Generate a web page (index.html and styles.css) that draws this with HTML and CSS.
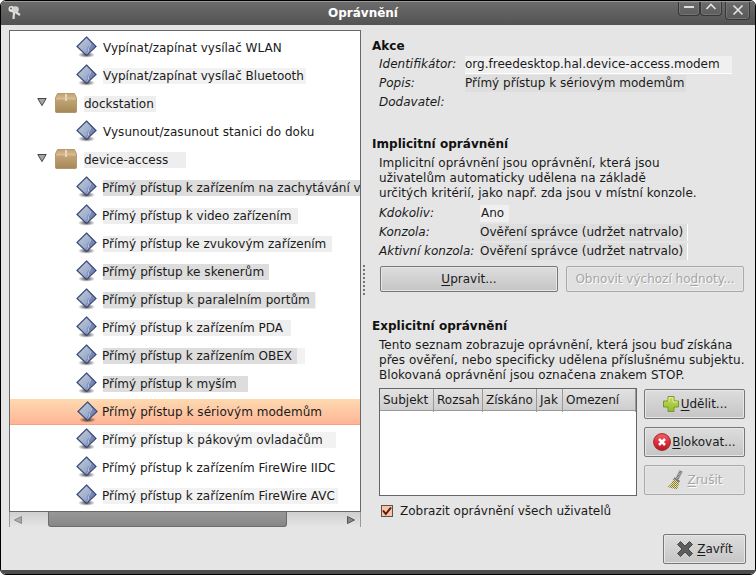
FILE: index.html
```
<!DOCTYPE html>
<html lang="cs">
<head>
<meta charset="utf-8">
<title>Oprávnění</title>
<link rel="stylesheet" href="styles.css">
</head>
<body>
<svg class="defs" width="0" height="0" aria-hidden="true">
  <defs>
    <linearGradient id="blue" x1="0" y1="0" x2="1" y2="1"><stop offset="0" stop-color="#c3cddd"/><stop offset=".5" stop-color="#a3b1cd"/><stop offset="1" stop-color="#8393bd"/></linearGradient>
    <radialGradient id="shade"><stop offset="0" stop-color="#000" stop-opacity=".75"/><stop offset="1" stop-color="#000" stop-opacity="0"/></radialGradient>
    <linearGradient id="tan" x1="0" y1="0" x2="0" y2="1"><stop offset="0" stop-color="#d0b183"/><stop offset="1" stop-color="#a58858"/></linearGradient>
    <linearGradient id="lid" x1="0" y1="0" x2="0" y2="1"><stop offset="0" stop-color="#c2a273"/><stop offset="1" stop-color="#d8bd93"/></linearGradient>
    <linearGradient id="green" x1="0" y1="0" x2="0" y2="1"><stop offset="0" stop-color="#c5dd5c"/><stop offset="1" stop-color="#93bb2b"/></linearGradient>
    <linearGradient id="red" x1="0" y1="0" x2="0" y2="1"><stop offset="0" stop-color="#f0656a"/><stop offset=".5" stop-color="#dc3039"/><stop offset="1" stop-color="#b51824"/></linearGradient>
    <pattern id="dots" width="2" height="2" patternUnits="userSpaceOnUse"><rect width="1" height="1" fill="#8b7d2c"/><rect x="1" y="1" width="1" height="1" fill="#8b7d2c"/><rect x="1" width="1" height="1" fill="#ebe5b8"/><rect y="1" width="1" height="1" fill="#ddd9c0"/></pattern>
    <symbol id="gem" viewBox="0 0 22 22">
      <ellipse cx="10.500" cy="18.800" rx="8.500" ry="3" fill="url(#shade)"/>
      <path d="M10.500 1 20 10.500 10.500 19.500 1 10.500z" fill="url(#blue)"/>
      <path d="M14.500 5.500 19 10.500 10.500 18.500 9 17.500 11.500 14 11.500 11.500 14 9z" fill="#6b7cad" opacity=".75"/>
      <path d="M15 7 14 10 12.500 12.500 12.500 15 11 18" fill="none" stroke="#c8d2e8" stroke-width="1" opacity=".75"/>
      <path d="M10.500 1 20 10.500 10.500 19.500 1 10.500z" fill="none" stroke="#3b4a78" stroke-width="1.200"/>
    </symbol>
    <symbol id="box" viewBox="0 0 22 20">
      <path d="M2.500.5h17L21.500 5v13.500q0 1-1 1h-19q-1 0-1-1V5z" fill="url(#tan)" stroke="#a98b5d" stroke-width=".8"/>
      <path d="M2.800 1h16.400l1.800 5H1z" fill="url(#lid)"/>
      <path d="M1 6h20" stroke="#dcc49c" stroke-width=".8"/>
      <path d="M11 1v7" stroke="#e6d6bb" stroke-width="2"/>
    </symbol>
    <symbol id="expand" viewBox="0 0 10 10"><path d="M.8 1.500h8.400L5 8.600z" fill="#a5a5a5" stroke="#454545"/></symbol>
  </defs>
</svg>
<div class="window">
  <header class="titlebar">
    <svg class="keys" width="16" height="16" viewBox="0 0 16 16"><path d="M5 5 7 8 6.500 14M7 6 13 10" fill="none" stroke="#ddddd8" stroke-width="2.200"/><circle cx="4.500" cy="4" r="3" fill="#e6e6e2"/><circle cx="8.500" cy="4.500" r="3.300" fill="#d2d2ce"/><circle cx="4" cy="3.500" r="1" fill="#666"/></svg>
    <h1>Oprávnění</h1>
    <div class="controls">
      <span class="ctl"><svg width="12" height="10" viewBox="0 0 12 10"><path d="M1 5h10" stroke="#ddd" stroke-width="2"/></svg></span>
      <span class="ctl"><svg width="12" height="10" viewBox="0 0 12 10"><path d="M1.500 7 6 2.500l4.500 4.500" fill="none" stroke="#e4e4e4" stroke-width="1.600"/></svg></span>
      <span class="ctl close"><svg width="12" height="12" viewBox="0 0 12 12"><path d="M1.500 1.500 10.500 10.500M10.500 1.500 1.500 10.500" stroke="#e4e4e4" stroke-width="1.600"/></svg></span>
    </div>
  </header>
  <main class="body">
    <section class="left">
      <ul class="tree">
        <li class="item"><svg class="gem"><use href="#gem"/></svg><span class="label">Vypínat/zapínat vysílač WLAN</span></li>
        <li class="item"><svg class="gem"><use href="#gem"/></svg><span class="label bluetooth">Vypínat/zapínat vysílač Bluetooth</span></li>
        <li class="group"><svg class="arrow"><use href="#expand"/></svg><svg class="box"><use href="#box"/></svg><span class="label dock">dockstation</span></li>
        <li class="item"><svg class="gem"><use href="#gem"/></svg><span class="label wide">Vysunout/zasunout stanici do doku</span></li>
        <li class="group"><svg class="arrow"><use href="#expand"/></svg><svg class="box"><use href="#box"/></svg><span class="label access">device-access</span></li>
        <li class="item"><svg class="gem"><use href="#gem"/></svg><span class="label capture">Přímý přístup k zařízením na zachytávání v</span></li>
        <li class="item"><svg class="gem"><use href="#gem"/></svg><span class="label video">Přímý přístup k video zařízením</span></li>
        <li class="item"><svg class="gem"><use href="#gem"/></svg><span class="label sound">Přímý přístup ke zvukovým zařízením</span></li>
        <li class="item"><svg class="gem"><use href="#gem"/></svg><span class="label wide scanner">Přímý přístup ke skenerům</span></li>
        <li class="item"><svg class="gem"><use href="#gem"/></svg><span class="label wide parallel">Přímý přístup k paralelním portům</span></li>
        <li class="item"><svg class="gem"><use href="#gem"/></svg><span class="label pda">Přímý přístup k zařízením PDA</span></li>
        <li class="item"><svg class="gem"><use href="#gem"/></svg><span class="label obex">Přímý přístup k zařízením OBEX</span></li>
        <li class="item"><svg class="gem"><use href="#gem"/></svg><span class="label mouse">Přímý přístup k myším</span></li>
        <li class="item selected"><svg class="gem"><use href="#gem"/></svg><span class="label wide">Přímý přístup k sériovým modemům</span></li>
        <li class="item"><svg class="gem"><use href="#gem"/></svg><span class="label wide joystick">Přímý přístup k pákovým ovladačům</span></li>
        <li class="item"><svg class="gem"><use href="#gem"/></svg><span class="label">Přímý přístup k zařízením FireWire IIDC</span></li>
        <li class="item"><svg class="gem"><use href="#gem"/></svg><span class="label avc">Přímý přístup k zařízením FireWire AVC</span></li>
      </ul>
      <div class="scrollbar">
        <svg width="8" height="8" viewBox="0 0 8 8"><path d="M7.500.5v7L.5 4z" fill="#aaa" stroke="#888"/></svg>
        <div class="thumb"></div>
        <svg width="8" height="8" viewBox="0 0 8 8"><path d="M.5.5v7L7.500 4z" fill="#888" stroke="#555"/></svg>
      </div>
    </section>
    <div class="grip"></div>
    <section class="right">
      <h2>Akce</h2>
      <dl class="action">
        <dt>Identifikátor:</dt><dd class="ident"><span>org.freedesktop.hal.device-access.modem</span></dd>
        <dt>Popis:</dt><dd class="desc"><span>Přímý přístup k sériovým modemům</span></dd>
        <dt>Dodavatel:</dt><dd></dd>
      </dl>
      <h2>Implicitní oprávnění</h2>
      <p>Implicitní oprávnění jsou oprávnění, která jsou<br>uživatelům automaticky udělena na základě<br>určitých kritérií, jako např. zda jsou v místní konzole.</p>
      <dl class="implicit">
        <dt>Kdokoliv:</dt><dd class="anyone"><span>Ano</span></dd>
        <dt>Konzola:</dt><dd class="console short"><span>Ověření správce (udržet natrvalo)</span></dd>
        <dt>Aktivní konzola:</dt><dd class="console"><span>Ověření správce (udržet natrvalo)</span></dd>
      </dl>
      <div class="pair">
        <button><span><u>U</u>pravit...</span></button>
        <button disabled><span>Obnovit výchozí ho<u>d</u>noty...</span></button>
      </div>
      <h2>Explicitní oprávnění</h2>
      <p>Tento seznam zobrazuje oprávnění, která jsou buď získána<br>přes ověření, nebo specificky udělena příslušnému subjektu.<br>Blokovaná oprávnění jsou označena znakem STOP.</p>
      <div class="explicit">
        <div class="table">
          <div class="thead"><span>Subjekt</span><span>Rozsah</span><span>Získáno</span><span>Jak</span><span>Omezení</span></div>
        </div>
        <div class="actions">
          <button><svg width="18" height="18" viewBox="0 0 18 18"><path d="M6 1.500h6V6h4.500v6H12v4.500H6V12H1.500V6H6z" fill="url(#green)" stroke="#77982b"/><path d="M7 7V2.500h4V7h4.500" fill="none" stroke="#e0efa0"/></svg><span><u>U</u>dělit...</span></button>
          <button><svg width="18" height="18" viewBox="0 0 18 18"><circle cx="9" cy="9" r="8.400" fill="url(#red)" stroke="#a5222b"/><path d="M6 6l6 6M12 6l-6 6" stroke="#fff" stroke-width="2.500"/></svg><span><u>B</u>lokovat...</span></button>
          <button class="revoke" disabled><svg width="18" height="20" viewBox="0 0 18 20"><path d="M15 1 11 9" stroke="#6f6f6f" stroke-width="3.500" stroke-dasharray="1 .5"/><path d="M7.500 8l6 3.500-1 4-1.500 4L1.500 17q5-3 6-9z" fill="url(#dots)"/><path d="M8 8l5.500 3.500" stroke="#777" stroke-width="1.500"/></svg><span><u>Z</u>rušit</span></button>
        </div>
      </div>
      <label class="check"><span class="tick"><svg width="10" height="10" viewBox="0 0 10 10"><path d="M1 4.500 3.800 8 9 1.500" fill="none" stroke="#471f15" stroke-width="2"/></svg></span>Zobrazit oprávnění všech uživatelů</label>
      <button class="quit"><svg width="18" height="18" viewBox="0 0 18 18"><path d="M4.500 1.500 9 6l4.500-4.500 3 3L12 9l4.500 4.500-3 3L9 12l-4.500 4.500-3-3L6 9 1.500 4.500z" fill="#5b5e5b" stroke="#484a48"/></svg><span><u>Z</u>avřít</span></button>
    </section>
  </main>
</div>
</body>
</html>
```
FILE: styles.css
```
* { box-sizing: border-box; }
body { margin: 0; width: 756px; height: 575px; overflow: hidden; background: #fff; font: 12px/15px "DejaVu Sans", sans-serif; color: #1a1a1a; }
.defs { position: absolute; }
svg { display: block; flex: none; }
h1, h2, p, dl, dd, ul { margin: 0; padding: 0; }
u { text-decoration: underline; text-underline-offset: 2px; text-decoration-thickness: 1px; }
.window { width: 756px; height: 575px; border: 1px solid #000; border-radius: 6px; background: #e5e5e5; overflow: hidden; display: flex; flex-direction: column; }
.titlebar { height: 24px; flex: none; display: flex; align-items: flex-start; background: linear-gradient(#6b6b6b, #535353); border-top: 1px solid #999; color: #fff; }
.keys { margin: 3px 0 0 6px; }
h1 { flex: 1; font-size: 12px; line-height: 15px; text-align: center; margin: 4px 0 0 25px; }
.controls { display: flex; margin-right: 5px; }
.ctl { width: 22px; height: 14px; border: 1px solid #373737; border-top: 0; border-radius: 0 0 4px 4px; box-shadow: inset 0 0 0 1px #747474; padding: 0 4px; }
.close { width: 25px; height: 18px; margin-left: 3px; padding: 2px 6px; }
.body { flex: 1; display: flex; border-bottom: 4px solid #4d4d4d; }
.left { width: 352px; margin: 5px 0 0 8px; flex: none; }
.tree { height: 482px; border: 1px solid #686868; background: #fff; padding-top: 4px; list-style: none; overflow: hidden; }
.tree li { height: 26px; margin-top: 2px; display: flex; align-items: flex-start; white-space: nowrap; }
.tree li:first-child { margin-top: 0; }
.gem { width: 22px; height: 22px; margin: 1px 5px 0 66px; }
.arrow { width: 10px; height: 10px; margin: 6px 8px 0 27px; }
.box { width: 22px; height: 20px; margin: 2px 7px 0 0; }
.label { height: 16px; margin-top: 5px; line-height: 16px; flex: none; }
.wide { letter-spacing: .05px; }
.item:nth-child(n+6) .label { text-indent: -1px; }
.selected { background: linear-gradient(#fddab0, #ffb596); border-bottom: 1px solid #f5a184; }
.selected .gem { margin: 2px 4px 0 67px; }
.bluetooth { width: 203px; background: #f2f2f2; }
.dock { width: 72px; background: #eee; }
.access { width: 102px; background: #eee; }
.capture { width: 257px; background: #ddd; }
.video { width: 195px; background: #eee; }
.sound { width: 229px; background: #eee; }
.scanner { width: 166px; background: #ddd; }
.parallel { width: 212px; background: #ddd; box-shadow: 1px 1px #f2f2f2; }
.pda { width: 188px; background: #eee; }
.obex { width: 194px; background: #ddd; box-shadow: 8px 0 #f2f2f2; }
.mouse { width: 145px; background: #ddd; }
.joystick { width: 233px; background: #f2f2f2; }
.avc { width: 235px; background: #f2f2f2; }
.scrollbar { height: 15px; display: flex; align-items: center; padding: 0 5px 0 4px; border: solid #999; border-width: 0 1px; background: linear-gradient(#cfcfcf, #e5e5e5); }
.thumb { width: 239px; height: 15px; margin: 0 auto 0 26px; border: 1px solid #6c6c6c; border-top: 0; border-radius: 0 0 3px 3px; background: linear-gradient(#979797, #878787); }
.grip { width: 2px; height: 30px; margin: 240px 0 0 2px; background: repeating-linear-gradient(#777 0 2px, #e5e5e5 2px 4px); }
.right { margin-left: 7px; width: 374px; padding-top: 14px; display: flex; flex-direction: column; }
h2 { font-size: 12px; line-height: 15px; color: #111; letter-spacing: .03px; }
dl { display: grid; grid-auto-rows: 19px; margin-left: 7px; white-space: nowrap; line-height: 19px; }
dt { font-style: italic; }
dd span { display: block; height: 17px; line-height: 17px; margin-top: 1px; }
.action { grid-template-columns: 86px 1fr; margin-top: 1px; margin-bottom: 25px; }
.ident span { width: 267px; height: 18px; background: #f0f0f0; border-bottom: 1px solid #fff; }
.desc span { width: 221px; background: #dedede; letter-spacing: .03px; }
p { margin: 4px 0 0 7px; white-space: nowrap; letter-spacing: .035px; }
.implicit { grid-template-columns: 101px 1fr; margin-top: 3px; }
.anyone span { width: 29px; background: #f0f0f0; text-indent: 1px; }
.console span { width: 208px; background: #dedede; border-right: 1px solid #fff; }
.pair { display: flex; gap: 8px; margin: 5px 0 27px 8px; }
.pair button { height: 26px; width: 178px; }
button { display: flex; align-items: center; justify-content: center; gap: 1px; padding: 0; margin: 0; font: inherit; color: #1a1a1a; border: 1px solid #777; border-radius: 2px; background: linear-gradient(#ddd, #c5c5c5); box-shadow: inset 0 0 0 1px #e7e7e7; white-space: nowrap; }
button:disabled { color: #a5a5a5; border-color: #aaa; background: #e0e0e0; text-shadow: 1px 1px #fff; }
.explicit { display: flex; gap: 7px; margin: 5px 0 0 7px; }
.table { width: 258px; height: 108px; border: 1px solid #666; background: #fff; }
.thead { height: 22px; display: grid; grid-template-columns: 54px 49px 54px 26px 1fr; background: linear-gradient(#e2e2e2, #cecece); border-bottom: 1px solid #999; }
.thead span { padding-left: 3px; line-height: 23px; border-right: 1px solid #999; }
.actions { display: flex; flex-direction: column; gap: 8px; padding-top: 1px; }
.actions button { width: 101px; height: 30px; }
.actions .revoke { gap: 3px; }
.check { display: flex; align-items: center; gap: 7px; height: 16px; margin: 7px 0 0 9px; }
.tick { width: 12px; height: 12px; border: 1px solid #555; background: #ffc2a0; }
.quit { align-self: flex-end; width: 83px; height: 30px; margin-top: 15px; gap: 3px; }
```
